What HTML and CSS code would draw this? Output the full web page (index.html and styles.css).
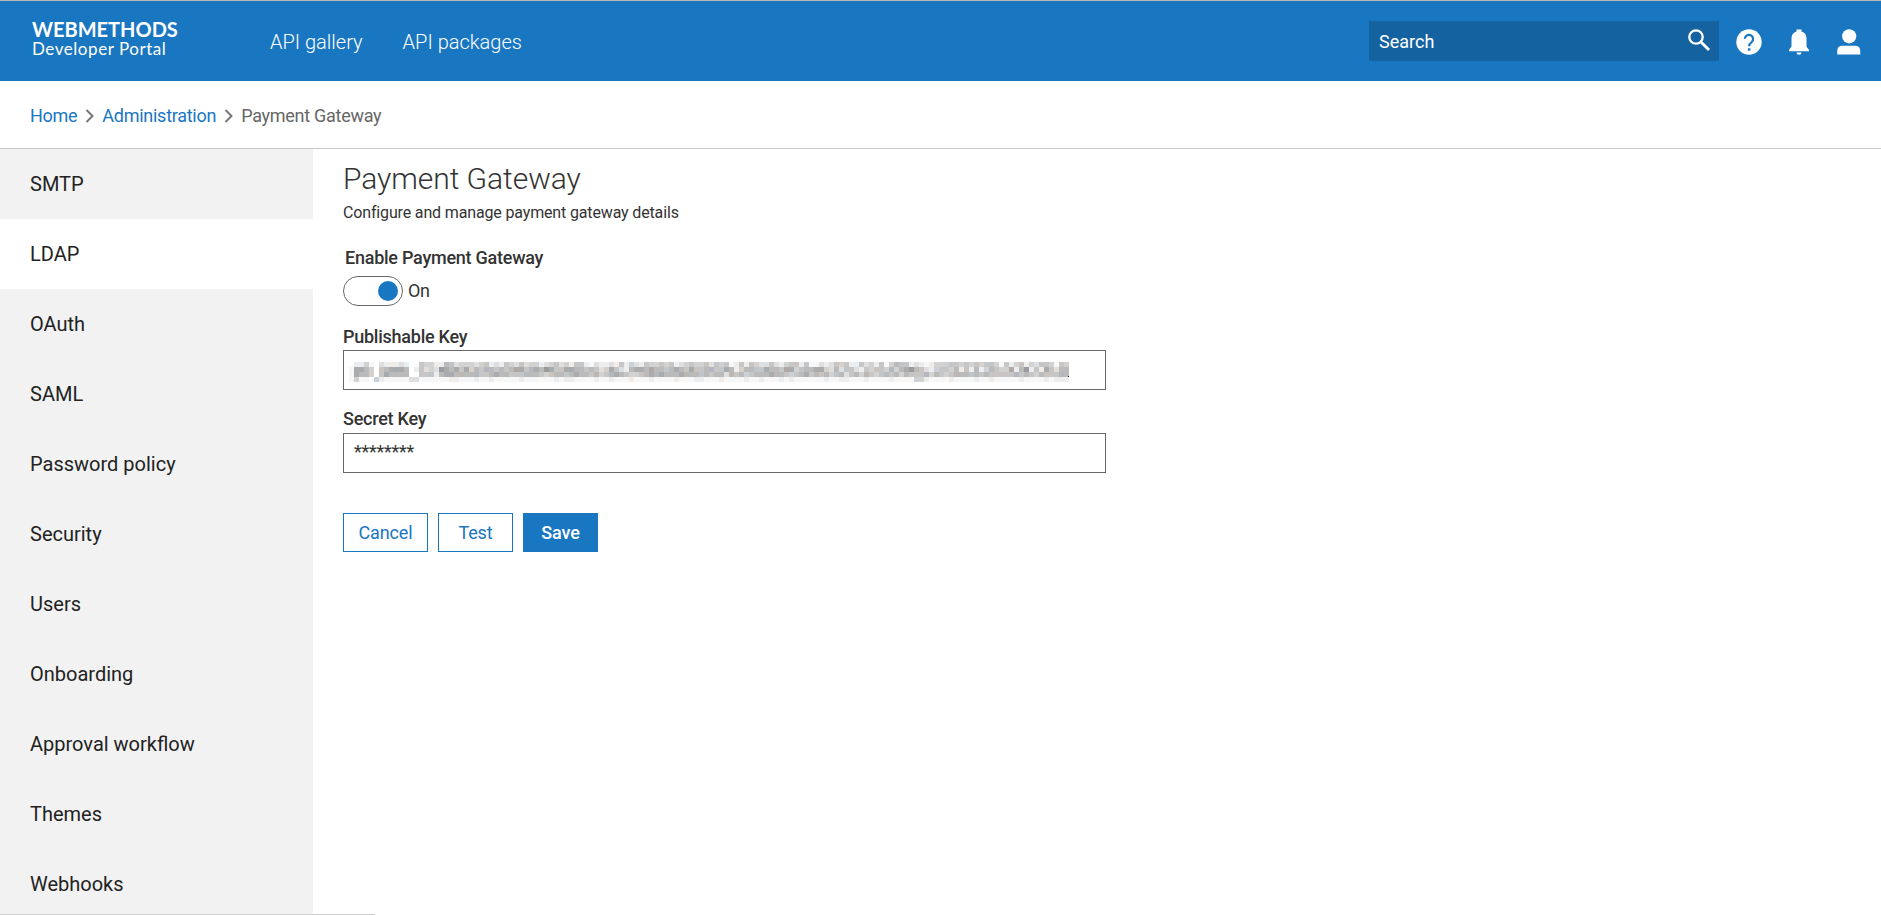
FILE: index.html
```html
<!DOCTYPE html>
<html lang="en">
<head>
<meta charset="utf-8">
<title>Payment Gateway - Developer Portal</title>
<link rel="stylesheet" href="styles.css">
</head>
<body>
<header class="topbar">
  <a class="brand"><span class="brand-name">WEBMETHODS</span><span class="brand-sub">Developer Portal</span></a>
  <nav class="topnav"><a>API gallery</a><a>API packages</a></nav>
  <div class="search"><span>Search</span>
    <svg width="22" height="22" viewBox="0 0 22 22"><circle cx="8" cy="8" r="6.7" fill="none" stroke="#fff" stroke-width="2.3"/><path d="M12 14l2-2 8 8-2 2z" fill="#fff"/></svg>
  </div>
  <div class="actions">
    <svg width="26" height="26" viewBox="0 0 26 26"><circle cx="13" cy="13" r="12.7" fill="#fff"/><path d="M8.9 9.800a4.100 4.100 0 1 1 6.800 3.200c-1.700 1.300-2.600 2-2.600 4.200" fill="none" stroke="#1976c1" stroke-width="2.200"/><path d="M11.900 19.300h2.500v2.400h-2.500z" fill="#1976c1"/></svg>
    <svg width="26" height="26" viewBox="0 0 26 26"><path d="M10.500 0.500h5v2.100c3.300 1 5 3.600 5 7v7.800L23 21v1.300H3V21l2.500-3.600V9.600c0-3.400 1.700-6 5-7zM10.500 23.500h5a2.500 2.200 0 0 1-5 0z" fill="#fff"/></svg>
    <svg width="26" height="26" viewBox="0 0 26 26"><circle cx="13.200" cy="7.300" r="7.100" fill="#fff"/><path d="M1.300 25.500v-4C1.300 18.500 3.200 16.800 6.200 16.800h13c3 0 5 1.700 5 4.700v4z" fill="#fff"/></svg>
  </div>
</header>
<nav class="crumbs">
  <a>Home</a><svg width="10" height="14" viewBox="0 0 10 14"><path d="M1.500 1l6 6-6 6"/></svg><a>Administration</a><svg width="10" height="14" viewBox="0 0 10 14"><path d="M1.500 1l6 6-6 6"/></svg><span>Payment Gateway</span>
</nav>
<div class="layout">
  <aside class="sidebar">
    <a>SMTP</a><a class="active">LDAP</a><a>OAuth</a><a>SAML</a><a>Password policy</a><a>Security</a><a>Users</a><a>Onboarding</a><a>Approval workflow</a><a>Themes</a><a>Webhooks</a>
  </aside>
  <main class="content">
    <h1>Payment Gateway</h1>
    <p class="lead">Configure and manage payment gateway details</p>
    <div class="label enable">Enable Payment Gateway</div>
    <div class="toggle-row"><span class="toggle"><i></i></span><span class="state">On</span></div>
    <div class="label first">Publishable Key</div>
    <div class="field masked"><svg class="mask" id="mask" width="720" height="20" viewBox="0 0 720 20" shape-rendering="crispEdges"></svg></div>
    <div class="label second">Secret Key</div>
    <div class="field">********</div>
    <div class="buttons"><button class="cancel">Cancel</button><button>Test</button><button class="save">Save</button></div>
  </main>
</div>
<div class="status-edge"></div>
<script src="mask.js"></script>
</body>
</html>
```
FILE: styles.css
```css
* { box-sizing: border-box; }
body { margin: 0; height: 915px; overflow: hidden; background: #fff; color: #333; font-family: Roboto, "Liberation Sans", sans-serif; font-size: 18px; }
svg { display: block; flex: none; }
.topbar { height: 81px; background: #1976c1; border-top: 1px solid #b8b8b8; display: flex; align-items: center; color: #fff; padding-right: 19px; }
.brand { width: 270px; padding: 0 0 5px 32px; display: flex; flex-direction: column; font-family: Lato, sans-serif; }
.brand-name { font-size: 20px; font-weight: 700; line-height: 20px; }
.brand-sub { font-size: 17px; line-height: 19px; letter-spacing: .55px; }
.topnav { display: flex; gap: 40px; font-size: 20px; font-weight: 300; padding-top: 2px; }
.search { margin-left: auto; width: 350px; height: 40px; background: #1562a1; padding: 0 9px 0 10px; display: flex; align-items: center; justify-content: space-between; }
.search svg { margin-bottom: 2px; }
.actions { display: flex; gap: 24px; margin-left: 17px; padding-top: 1px; }
.crumbs { height: 68px; border-bottom: 1px solid #c8c8c8; padding: 2px 0 0 30px; display: flex; align-items: center; color: #666; letter-spacing: -.27px; }
.crumbs a { color: #1976c1; }
.crumbs svg { margin: 0 7px 0 8px; }
.crumbs path { fill: none; stroke: #777; stroke-width: 2; }
.layout { display: flex; height: 766px; overflow: hidden; }
.sidebar { width: 313px; background: #f2f2f2; flex: none; }
.sidebar a { display: flex; align-items: center; height: 70px; padding-left: 30px; font-size: 20px; color: #222; }
.sidebar .active { background: #fff; }
.content { padding-left: 30px; width: 793px; }
h1 { margin: 11px 0 0; font-size: 30px; line-height: 37px; font-weight: 300; letter-spacing: -.05px; }
.lead { margin: 6px 0 0; font-size: 16px; line-height: 20px; letter-spacing: -.15px; }
.label { font-weight: 500; line-height: 22px; letter-spacing: -.25px; }
.enable { margin: 24px 0 7px 2px; }
.toggle-row { display: flex; align-items: center; gap: 5px; margin-bottom: 20px; }
.state { margin-top: -1px; letter-spacing: -.3px; }
.toggle { width: 60px; height: 30px; border: 1px solid #666; border-radius: 15px; display: flex; align-items: center; justify-content: flex-end; padding-right: 4px; }
.toggle i { width: 20px; height: 20px; border-radius: 50%; background: #1976c1; }
.first { margin-bottom: 2px; }
.second { margin: 18px 0 3px; }
.field { height: 40px; border: 1px solid #666; padding-left: 10px; line-height: 36px; letter-spacing: -.25px; }
.masked { padding: 11px 0 0 5px; }
.mask { overflow: visible; }
.buttons { display: flex; gap: 10px; margin-top: 40px; }
button { height: 39px; width: 75px; border: 1px solid #1976c1; background: #fff; color: #1976c1; font: 18px Roboto, sans-serif; letter-spacing: -.15px; padding: 0; }
.cancel { width: 85px; }
.save { background: #1976c1; color: #fff; font-weight: 500; }
.status-edge { position: absolute; left: 0; top: 914px; width: 375px; height: 1px; background: #d0d0d0; }
```
FILE: mask.js
```js
// Mosaic that hides the key: four rows of 5px cells, digits are shade levels.
const shades = ['#ffffff', '#f8f7f7', '#ededed', '#dfdfe0', '#d2d2d2', '#c6c6c7', '#bababa', '#aaabad', '#9b9b9c'];
const warm = ['#ffffff', '#faf7f5', '#f1ece8', '#e2ddd8', '#d6d0ca', '#cac4c0', '#bdb7b3', '#b0a8a4', '#a39b97'];
const cool = ['#ffffff', '#f5f8fa', '#e9eef2', '#dadfe6', '#ccd1d8', '#c0c5ca', '#b4b8be', '#a6aab0', '#989ca2'];
const rows = [
  '022410322232005442265344434523254353442345342552132232524325445452345445354512525433532455251132354522534251465523212444554545455415245243554154',
  '177640567776025343876757465665656775676875577665653475326776766567657556655762466557665774566774363553254554646786532455462526246544726825275366',
  '176640576666005552677666665567665556665456656766564567654456767666766656566365645666766545675656456356465456564655564654566656565555565654655566',
  '141104211111331111112211121121111121111112122111121121112111211112111221112111121121112121111112112211121111211114421111211112112111112111121222'
];
let cells = '';
rows.forEach((row, y) => {
  [...row].forEach((level, x) => {
    const tint = (x * 7 + y * 5) % 9;
    const palette = tint === 2 ? warm : tint === 5 ? cool : shades;
    if (level !== '0') cells += `<rect x="${x * 5}" y="${y * 5}" width="5" height="5" fill="${palette[level]}"/>`;
  });
});
cells += '<rect x="719" y="14" width="1" height="1" fill="#222"/>';
document.getElementById('mask').innerHTML = cells;
```
